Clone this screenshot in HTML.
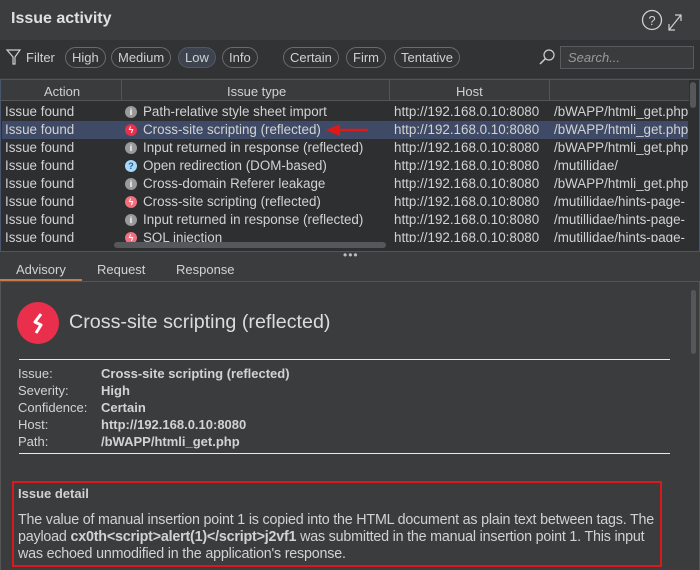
<!DOCTYPE html>
<html><head><style>
*{margin:0;padding:0;box-sizing:border-box}
body{width:700px;height:570px;background:#3b3c3e;font-family:"Liberation Sans",sans-serif;color:#d2d2d2;position:relative;overflow:hidden;font-size:13px}
.a{position:absolute;white-space:nowrap}
.pill{position:absolute;top:47px;height:21px;border:1px solid #6a6b6e;border-radius:11px;font-size:13px;line-height:19px;padding:0 6px;color:#d0d0d0}
.row{position:absolute;left:2px;width:686px;height:18px;font-size:13.4px;line-height:18px}
.row span{position:absolute}
.ic{width:12px;height:12px;border-radius:50%;top:3px;font-size:9px;line-height:12px;text-align:center;color:#fff;font-weight:bold}
.lbl{position:absolute;left:18px;font-size:13px}
.val{position:absolute;left:101px;font-size:13px;font-weight:bold}
</style></head><body>
<div class="a" style="left:0;top:0;width:700px;height:40px;background:#3c3d3f"></div>
<div class="a" style="left:11px;top:10px;font-size:16px;font-weight:bold;color:#e0e0e0">Issue activity</div>
<svg class="a" style="left:641px;top:9px" width="56" height="24"><circle cx="11" cy="11" r="9.5" fill="none" stroke="#d0d0d0" stroke-width="1.3"/><text x="11" y="16" font-size="13" fill="#d0d0d0" text-anchor="middle" font-family="Liberation Sans">?</text><path d="M28 21 L40 6 M34 6 L40 6 L40 12 M28 15 L28 21 L34 21" stroke="#d0d0d0" fill="none" stroke-width="1.2"/></svg>
<div class="a" style="left:0;top:40px;width:700px;height:38px;background:#323335"></div>
<svg class="a" style="left:6px;top:48px" width="16" height="18"><path d="M1 2 L14 2 L9 9 L9 16 L7 16 L7 9 Z" fill="none" stroke="#cfcfcf" stroke-width="1.2"/></svg>
<div class="a" style="left:26px;top:50px;font-size:13px">Filter</div>
<div class="pill" style="left:65px">High</div>
<div class="pill" style="left:111px">Medium</div>
<div class="pill" style="left:178px;background:#3d4450;border-color:#555a62">Low</div>
<div class="pill" style="left:222px">Info</div>
<div class="pill" style="left:283px">Certain</div>
<div class="pill" style="left:346px">Firm</div>
<div class="pill" style="left:394px">Tentative</div>
<svg class="a" style="left:538px;top:48px" width="18" height="18"><circle cx="11" cy="7" r="5" fill="none" stroke="#cfcfcf" stroke-width="1.2"/><path d="M7.5 10.5 L2 16" stroke="#cfcfcf" stroke-width="1.5"/></svg>
<div class="a" style="left:560px;top:46px;width:134px;height:23px;background:#3a3b3d;border:1px solid #5a5b5e"></div>
<div class="a" style="left:568px;top:50px;font-style:italic;color:#9a9a9a">Search...</div>
<div class="a" style="left:0;top:79px;width:700px;height:173px;background:#2e2f31;border:1px solid #4a5570"></div>
<div class="a" style="left:1px;top:80px;width:688px;height:21px;background:#3a3b3d;border-bottom:1px solid #555"></div>
<div class="a" style="left:121px;top:80px;width:1px;height:21px;background:#555"></div>
<div class="a" style="left:389px;top:80px;width:1px;height:21px;background:#555"></div>
<div class="a" style="left:549px;top:80px;width:1px;height:21px;background:#555"></div>
<div class="a" style="left:44px;top:84px;color:#d0d0d0">Action</div>
<div class="a" style="left:227px;top:84px">Issue type</div>
<div class="a" style="left:456px;top:84px">Host</div>
<div class="row" style="top:103px"><span style="left:3px">Issue found</span><span class="ic" style="left:123px;background:#9a9a9a">i</span><span style="left:141px">Path-relative style sheet import</span><span style="left:392px">http://192.168.0.10:8080</span><span style="left:552px">/bWAPP/htmli_get.php</span></div>
<div class="row" style="top:121px;background:#3e4a66"><span style="left:3px">Issue found</span><span class="ic" style="left:123px;background:#e8304a">ϟ</span><span style="left:141px">Cross-site scripting (reflected)</span><span style="left:392px">http://192.168.0.10:8080</span><span style="left:552px">/bWAPP/htmli_get.php</span></div>
<svg class="a" style="left:324px;top:123px" width="46" height="14"><path d="M44 7 L14 7" stroke="#e01818" stroke-width="2.5"/><path d="M2 7 L16 1 L16 13 Z" fill="#e01818"/></svg>
<div class="row" style="top:139px"><span style="left:3px">Issue found</span><span class="ic" style="left:123px;background:#9a9a9a">i</span><span style="left:141px">Input returned in response (reflected)</span><span style="left:392px">http://192.168.0.10:8080</span><span style="left:552px">/bWAPP/htmli_get.php</span></div>
<div class="row" style="top:157px"><span style="left:3px">Issue found</span><span class="ic" style="left:123px;background:#a8d8f8;color:#2a5a9a">?</span><span style="left:141px">Open redirection (DOM-based)</span><span style="left:392px">http://192.168.0.10:8080</span><span style="left:552px">/mutillidae/</span></div>
<div class="row" style="top:175px"><span style="left:3px">Issue found</span><span class="ic" style="left:123px;background:#9a9a9a">i</span><span style="left:141px">Cross-domain Referer leakage</span><span style="left:392px">http://192.168.0.10:8080</span><span style="left:552px">/bWAPP/htmli_get.php</span></div>
<div class="row" style="top:193px"><span style="left:3px">Issue found</span><span class="ic" style="left:123px;background:#f07080">ϟ</span><span style="left:141px">Cross-site scripting (reflected)</span><span style="left:392px">http://192.168.0.10:8080</span><span style="left:552px">/mutillidae/hints-page-</span></div>
<div class="row" style="top:211px"><span style="left:3px">Issue found</span><span class="ic" style="left:123px;background:#9a9a9a">i</span><span style="left:141px">Input returned in response (reflected)</span><span style="left:392px">http://192.168.0.10:8080</span><span style="left:552px">/mutillidae/hints-page-</span></div>
<div class="row" style="top:229px;height:13px;overflow:hidden"><span style="left:3px">Issue found</span><span class="ic" style="left:123px;background:#f07080">ϟ</span><span style="left:141px">SQL injection</span><span style="left:392px">http://192.168.0.10:8080</span><span style="left:552px">/mutillidae/hints-page-</span></div>
<div class="a" style="left:114px;top:242px;width:272px;height:6px;border-radius:3px;background:#55575a"></div>
<div class="a" style="left:690px;top:82px;width:6px;height:26px;border-radius:3px;background:#55575a"></div>
<div class="a" style="left:343px;top:248px;font-size:12px;color:#bbb;letter-spacing:1px">•••</div>
<div class="a" style="left:16px;top:262px">Advisory</div>
<div class="a" style="left:97px;top:262px">Request</div>
<div class="a" style="left:176px;top:262px">Response</div>
<div class="a" style="left:0;top:279px;width:82px;height:2px;background:#c87a4a"></div>
<div class="a" style="left:0;top:281px;width:700px;height:289px;border:1px solid #555;border-bottom:none;background:#3b3c3e"></div>
<div class="a" style="left:691px;top:290px;width:5px;height:64px;border-radius:3px;background:#55575a"></div>
<svg class="a" style="left:17px;top:302px" width="44" height="44"><circle cx="21" cy="21" r="21" fill="#ea2f4c"/><path d="M24 12 L18 20 L24 23 L19 31" fill="none" stroke="#fff" stroke-width="3" stroke-linejoin="round"/></svg>
<div class="a" style="left:69px;top:311px;font-size:19.7px;color:#dcdcdc">Cross-site scripting (reflected)</div>
<div class="a" style="left:19px;top:359px;width:651px;height:1px;background:#e8e8e8"></div>
<div class="lbl" style="top:366px">Issue:</div><div class="val" style="top:366px">Cross-site scripting (reflected)</div>
<div class="lbl" style="top:383px">Severity:</div><div class="val" style="top:383px">High</div>
<div class="lbl" style="top:400px">Confidence:</div><div class="val" style="top:400px">Certain</div>
<div class="lbl" style="top:417px">Host:</div><div class="val" style="top:417px">http://192.168.0.10:8080</div>
<div class="lbl" style="top:434px">Path:</div><div class="val" style="top:434px">/bWAPP/htmli_get.php</div>
<div class="a" style="left:19px;top:453px;width:651px;height:1px;background:#e8e8e8"></div>
<div class="a" style="left:12px;top:481px;width:650px;height:86px;border:2px solid #d81a1a"></div>
<div class="a" style="left:18px;top:486px;font-weight:bold">Issue detail</div>
<div class="a" style="left:18px;top:512px;line-height:17px;white-space:normal;width:645px;font-size:14.3px;letter-spacing:-0.2px">The value of manual insertion point 1 is copied into the HTML document as plain text between tags. The payload <b>cx0th&lt;script&gt;alert(1)&lt;/script&gt;j2vf1</b> was submitted in the manual insertion point 1. This input was echoed unmodified in the application's response.</div>
</body></html>
